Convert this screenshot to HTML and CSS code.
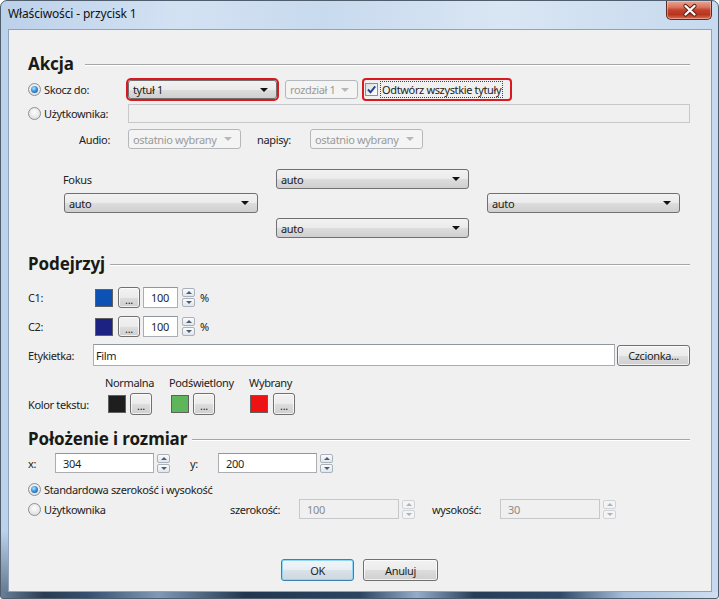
FILE: index.html
```html
<!DOCTYPE html>
<html lang="pl">
<head>
<meta charset="utf-8">
<title>Właściwości - przycisk 1</title>
<link rel="stylesheet" href="styles.css">
</head>
<body>
<div class="window">
  <div class="titlebar">
    <span class="title">Właściwości - przycisk 1</span>
    <div class="close">
      <svg width="46" height="19" viewBox="0 0 46 19">
        <path d="M18.5 5 L27.5 13.5 M27.5 5 L18.5 13.5" stroke="#5b1a10" stroke-width="4.2" stroke-linecap="round"/>
        <path d="M18.5 5 L27.5 13.5 M27.5 5 L18.5 13.5" stroke="#ffffff" stroke-width="2.4" stroke-linecap="round"/>
      </svg>
    </div>
  </div>
  <div class="client">
    <div class="heading"><span class="htext wide">Akcja</span><i class="rule"></i></div>

    <div class="row h19 mt6">
      <label class="opt w100"><span class="radio on"></span>Skocz do:</label>
      <div class="select hl w149"><span>tytuł 1</span><i class="arrow"></i></div>
      <div class="select dis w73 ml8"><span>rozdział 1</span><i class="arrow"></i></div>
      <label class="check hl ml6"><span class="cb"><svg width="11" height="11" viewBox="0 0 11 11"><path d="M2 5.5 L4.5 8.3 L9.2 2.3" fill="none" stroke="#21418f" stroke-width="1.9"/></svg></span><span class="focus">Odtwórz wszystkie tytuły</span></label>
    </div>

    <div class="row h19 mt5">
      <label class="opt w100"><span class="radio"></span>Użytkownika:</label>
      <div class="input dis grow"></div>
    </div>

    <div class="row h20 mt6">
      <span class="lbl w100 right pr18">Audio:</span>
      <div class="select dis w113"><span>ostatnio wybrany</span><i class="arrow"></i></div>
      <span class="lbl ml16 w53">napisy:</span>
      <div class="select dis w113"><span>ostatnio wybrany</span><i class="arrow"></i></div>
    </div>

    <div class="fokus">
      <span class="lbl f-label">Fokus</span>
      <div class="select f-top"><span>auto</span><i class="arrow"></i></div>
      <div class="select f-left"><span>auto</span><i class="arrow"></i></div>
      <div class="select f-right"><span>auto</span><i class="arrow"></i></div>
      <div class="select f-bottom"><span>auto</span><i class="arrow"></i></div>
    </div>

    <div class="heading mt16"><span class="htext">Podejrzyj</span><i class="rule"></i></div>

    <div class="row h21 mt13">
      <span class="lbl w67">C1:</span>
      <span class="swatch c-blue"></span>
      <button class="btn dots ml5">...</button>
      <div class="input w35 ml3 num">100</div>
      <div class="spin ml4"><i class="up"></i><i class="dn"></i></div>
      <span class="lbl ml5">%</span>
    </div>

    <div class="row h21 mt8">
      <span class="lbl w67">C2:</span>
      <span class="swatch c-navy"></span>
      <button class="btn dots ml5">...</button>
      <div class="input w35 ml3 num">100</div>
      <div class="spin ml4"><i class="up"></i><i class="dn"></i></div>
      <span class="lbl ml5">%</span>
    </div>

    <div class="row h22 mt7">
      <span class="lbl w65">Etykietka:</span>
      <div class="input w522 txt">Film</div>
      <button class="btn font ml2">Czcionka...</button>
    </div>

    <div class="row h14 mt9 heads">
      <span class="lbl w64">Normalna</span>
      <span class="lbl w80">Podświetlony</span>
      <span class="lbl">Wybrany</span>
    </div>

    <div class="row h22 mt4">
      <span class="lbl w80">Kolor tekstu:</span>
      <span class="swatch c-black"></span>
      <button class="btn dots sq ml4">...</button>
      <span class="swatch c-green ml19"></span>
      <button class="btn dots sq ml4">...</button>
      <span class="swatch c-red ml35"></span>
      <button class="btn dots sq ml5">...</button>
    </div>

    <div class="heading mt14"><span class="htext">Położenie i rozmiar</span><i class="rule"></i></div>

    <div class="row h20 mt4">
      <span class="lbl w27">x:</span>
      <div class="input w99 num">304</div>
      <div class="spin ml3"><i class="up"></i><i class="dn"></i></div>
      <span class="lbl ml20 w28">y:</span>
      <div class="input w99 num">200</div>
      <div class="spin ml3"><i class="up"></i><i class="dn"></i></div>
    </div>

    <div class="row h17 mt8">
      <label class="opt"><span class="radio on"></span>Standardowa szerokość i wysokość</label>
    </div>

    <div class="row h20 mt1">
      <label class="opt w202"><span class="radio"></span>Użytkownika</label>
      <span class="lbl w69">szerokość:</span>
      <div class="input dis w100 num">100</div>
      <div class="spin dis ml3"><i class="up"></i><i class="dn"></i></div>
      <span class="lbl ml17 w68">wysokość:</span>
      <div class="input dis w100 num">30</div>
      <div class="spin dis ml3"><i class="up"></i><i class="dn"></i></div>
    </div>

    <div class="buttons">
      <button class="btn dlg default">OK</button>
      <button class="btn dlg">Anuluj</button>
    </div>
  </div>
</div>
</body>
</html>
```
FILE: styles.css
```css
* { box-sizing: border-box; margin: 0; padding: 0; }
html, body { width: 719px; height: 599px; overflow: hidden; background: #ffffff; }
body { font-family: "Noto Sans", "Open Sans", sans-serif; font-size: 11px; letter-spacing: -0.35px; color: #222222; }

.window {
  width: 719px; height: 599px;
  display: flex; flex-direction: column;
  padding: 0 6px 6px 7px;
  border: 1px solid #4f5d6c;
  border-radius: 7px 7px 3px 3px;
  background:
    linear-gradient(90deg, #6a8098 0, #2a3c52 6%, #34506e 12%, #7f99b6 22%, #22374f 34%, #2a4462 50%, #94adc8 58%, #263d58 66%, #2f4a68 78%, #a6bfdb 87%, #cfdff0 100%) left bottom / 100% 6px no-repeat,
    linear-gradient(180deg, rgba(0,0,0,0) 0, rgba(0,0,0,0) 530px, rgba(20,40,60,0.5) 590px) left top / 7px 100% no-repeat,
    linear-gradient(90deg, #bcd1ea 0, #d3e2f3 25%, #c8daee 45%, #d9e6f4 70%, #c6d9ee 100%);
}

.titlebar {
  height: 28px; flex: none;
  display: flex; justify-content: space-between; align-items: flex-start;
}
.title { font-size: 12px; letter-spacing: -0.15px; color: #111; line-height: 26px; padding-left: 0; }
.close {
  width: 46px; height: 19px; margin-right: 0;
  border: 1px solid #5e2a22; border-top: none;
  border-radius: 0 0 5px 5px;
  background: linear-gradient(180deg, #e9a795 0, #d9735d 35%, #c2432c 50%, #b7351f 75%, #d86e52 100%);
  box-shadow: inset 0 0 0 1px rgba(255,220,210,0.45);
}
.close svg { display: block; }

.client {
  flex: 1;
  border: 1px solid #8ea3bb;
  background: #f0f0f0;
  padding: 24px 21px 0 19px;
  display: flex; flex-direction: column;
}

.heading { height: 20px; display: flex; align-items: center; flex: none; }
.htext { font-size: 17px; font-weight: 700; letter-spacing: -0.1px; color: #1a1a14; line-height: 20px; }
.htext.wide { margin-right: 6px; }
.rule { flex: 1; height: 2px; margin-left: 5px; border-top: 1px solid #a6a6a6; border-bottom: 1px solid #ffffff; margin-top: 1px; }

.row { display: flex; align-items: center; flex: none; }
.h14 { height: 14px; } .h17 { height: 17px; } .h19 { height: 19px; } .h20 { height: 20px; } .h21 { height: 21px; } .h22 { height: 22px; }
.mt1 { margin-top: 1px; } .mt4 { margin-top: 4px; } .mt5 { margin-top: 5px; } .mt6 { margin-top: 6px; } .mt7 { margin-top: 7px; }
.mt8 { margin-top: 8px; } .mt9 { margin-top: 9px; } .mt13 { margin-top: 13px; } .mt14 { margin-top: 14px; } .mt16 { margin-top: 16px; }
.ml2 { margin-left: 2px; } .ml3 { margin-left: 3px; } .ml4 { margin-left: 4px; } .ml5 { margin-left: 5px; } .ml6 { margin-left: 6px; }
.ml8 { margin-left: 8px; } .ml16 { margin-left: 16px; } .ml17 { margin-left: 17px; } .ml19 { margin-left: 19px; } .ml20 { margin-left: 20px; } .ml35 { margin-left: 35px; }
.w27 { width: 27px; } .w28 { width: 28px; } .w35 { width: 35px; } .w53 { width: 53px; } .w64 { width: 64px; } .w65 { width: 65px; }
.w67 { width: 67px; } .w68 { width: 68px; } .w69 { width: 69px; } .w73 { width: 73px; } .w80 { width: 80px; } .w99 { width: 99px; }
.w100 { width: 100px; } .w113 { width: 113px; } .w149 { width: 149px; } .w202 { width: 202px; } .w522 { width: 522px; }
.grow { flex: 1; }
.right { text-align: right; } .pr18 { padding-right: 18px; }
.lbl { flex: none; white-space: nowrap; }
.heads { padding-left: 77px; }

.opt { display: flex; align-items: center; flex: none; white-space: nowrap; }
.radio {
  width: 13px; height: 13px; border-radius: 50%; flex: none;
  margin-right: 3px;
  border: 1px solid #8d9092;
  background: radial-gradient(circle at 50% 40%, #ffffff 0, #e6e6e6 60%, #cfd2d4 100%);
  display: flex; align-items: center; justify-content: center;
}
.radio.on::after {
  content: ""; width: 7px; height: 7px; border-radius: 50%;
  background: radial-gradient(circle at 40% 35%, #b6e3ff 0, #3d93dd 45%, #0f4a8c 100%);
}

.select {
  height: 100%; display: flex; align-items: center; justify-content: space-between;
  padding: 0 8px 0 4px;
  border: 1px solid #707070; border-radius: 3px;
  background: linear-gradient(180deg, #f2f2f2 0, #ebebeb 50%, #dddddd 51%, #cfcfcf 100%);
  color: #1a1a1a; flex: none; white-space: nowrap; overflow: hidden;
}
.arrow { width: 0; height: 0; border-left: 4px solid transparent; border-right: 4px solid transparent; border-top: 4px solid #111; flex: none; }
.select.dis { background: #f4f4f4; border-color: #b4b8bb; color: #9a9a9a; }
.select.dis .arrow { border-top-color: #b8b8b8; }
.hl { box-shadow: 0 0 0 2px #d9191f; }

.check { height: 100%; width: 146px; display: flex; align-items: center; padding-left: 1px; border-radius: 2px; flex: none; }
.cb {
  width: 13px; height: 13px; border: 1px solid #8e8f8f; background: linear-gradient(135deg, #dcdcdc, #ffffff);
  display: flex; align-items: center; justify-content: center; flex: none; margin-right: 2px;
}
.cb svg { display: block; }
.focus { border: 1px dotted #444; padding: 0 1px; line-height: 15px; white-space: nowrap; }

.input {
  height: 100%; border: 1px solid #abadb3; border-top-color: #8f969e; background: #ffffff;
  display: flex; align-items: center; flex: none; color: #1f1f1f;
}
.input.num { padding-left: 7px; }
.input.txt { padding-left: 2px; }
.input.dis { background: #f0f0f0; border-color: #c6c8ca; color: #8a8a8a; }
.input.grow { flex: 1; }

.spin { width: 13px; height: 19px; display: flex; flex-direction: column; gap: 1px; flex: none; }
.spin i {
  flex: 1; border: 1px solid #a9b1bd; border-radius: 2px;
  background: linear-gradient(180deg, #fafbfc, #e2e6ea);
  display: flex; align-items: center; justify-content: center;
}
.spin .up::after { content: ""; border-left: 3px solid transparent; border-right: 3px solid transparent; border-bottom: 3px solid #4d5d73; }
.spin .dn::after { content: ""; border-left: 3px solid transparent; border-right: 3px solid transparent; border-top: 3px solid #4d5d73; }
.spin.dis i { border-color: #cfd3d8; background: #f4f4f4; }
.spin.dis .up::after { border-bottom-color: #aab2bc; }
.spin.dis .dn::after { border-top-color: #aab2bc; }

.swatch { width: 18px; height: 18px; border: 1px solid #606060; flex: none; }
.c-blue { background: #0b52b4; }
.c-navy { background: #1c2282; }
.c-black { background: #1e1e1e; }
.c-green { background: #5db65a; }
.c-red { background: #ef1212; }

.btn {
  font-family: inherit; font-size: 11px; letter-spacing: -0.35px; color: #1f1f1f;
  border: 1px solid #707070; border-radius: 3px;
  background: linear-gradient(180deg, #f2f2f2 0, #ebebeb 50%, #dddddd 51%, #cfcfcf 100%);
  box-shadow: inset 0 0 0 1px rgba(255,255,255,0.7);
  display: flex; align-items: center; justify-content: center; flex: none;
  cursor: default;
}
.dots { width: 22px; height: 21px; padding-top: 3px; }
.dots.sq { height: 22px; }
.font { width: 73px; height: 21px; }
.buttons { display: flex; justify-content: center; gap: 9px; margin-top: 40px; flex: none; padding-left: 1px; }
.dlg { width: 73px; height: 22px; }
.dlg + .dlg { width: 75px; }
.default {
  border-color: #3c7fb1;
  box-shadow: inset 0 0 0 1px #8fd7f6;
  background: linear-gradient(180deg, #f1f5f8 0, #e7eef3 50%, #d8e2e8 51%, #cdd8de 100%);
}

.fokus {
  display: grid;
  grid-template-columns: 194px 193px 193px;
  grid-template-rows: 20px 20px 21px;
  column-gap: 18px; row-gap: 4px;
  margin: 20px 0 0 36px; flex: none;
}
.f-label { grid-column: 1; grid-row: 1; align-self: center; margin-left: -1px; }
.f-top { grid-column: 2; grid-row: 1; }
.f-left { grid-column: 1; grid-row: 2; }
.f-right { grid-column: 3; grid-row: 2; }
.f-bottom { grid-column: 2; grid-row: 3; height: 20px; align-self: end; }
```
